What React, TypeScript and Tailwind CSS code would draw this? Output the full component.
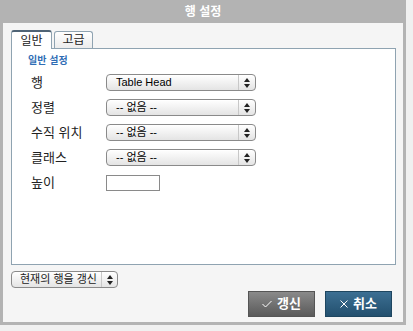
import React from "react";

const font = { fontFamily: '"Liberation Sans", "Noto Sans CJK KR", sans-serif' };

function Arrows() {
  return (
    <svg width="6" height="10" viewBox="0 0 6 10">
      <path d="M3 0 L6 4 L0 4 Z" fill="#222" />
      <path d="M0 6 L6 6 L3 10 Z" fill="#222" />
    </svg>
  );
}

function Select({ value, w }: { value: string; w: string }) {
  return (
    <div
      className={`flex h-[17px] ${w} items-stretch rounded-[4px] border border-[#8a8a8a] bg-gradient-to-b from-[#ffffff] to-[#e4e4e4] shadow-[inset_0_1px_0_#fff]`}
    >
      <div className="flex flex-1 items-center pl-[9px] text-[11px] leading-none text-black">{value}</div>
      <div className="flex w-[17px] items-center justify-center border-l border-[#c8c8c8]">
        <Arrows />
      </div>
    </div>
  );
}

function Row({ label, children }: { label: string; children: React.ReactNode }) {
  return (
    <div className="flex h-[25px] items-center">
      <div className="w-[94px] pl-[19px] text-[13px] text-[#222]">{label}</div>
      {children}
    </div>
  );
}

export default function App() {
  return (
    <div className="h-[331px] w-[413px] overflow-hidden bg-[#f0f0f0]" style={font}>
      <div className="flex h-[325px] w-[406px] flex-col border-[3px] border-t-0 border-[#b3b3b3] bg-[#f5f5f5]">
        <div className="-mx-[3px] flex h-[23px] items-center justify-center bg-[#b3b3b3] text-[12px] font-bold text-white">
          행 설정
        </div>
        <div className="flex flex-1 flex-col px-[8px] pt-[7px]">
          <div className="flex items-end gap-[2px] pl-[0px]">
            <div className="relative z-10 -mb-px flex h-[19px] w-[41px] items-center justify-center rounded-t-[3px] border border-b-0 border-[#8fa3b1] border-t-[2px] border-t-[#4f6375] bg-white text-[12px] text-[#222]">
              일반
            </div>
            <div className="flex h-[17px] w-[39px] items-center justify-center rounded-t-[3px] border border-b-0 border-[#8fa3b1] bg-gradient-to-b from-[#ffffff] to-[#ececec] text-[12px] text-[#222]">
              고급
            </div>
          </div>
          <div className="h-[217px] w-[385px] border border-[#8fa3b1] bg-white pt-[4px]">
            <div className="pl-[16px] text-[10px] font-bold text-[#2f6db5]">일반 설정</div>
            <div className="mt-[2px] flex flex-col">
              <Row label="행">
                <Select value="Table Head" w="w-[150px]" />
              </Row>
              <Row label="정렬">
                <Select value="-- 없음 --" w="w-[150px]" />
              </Row>
              <Row label="수직 위치">
                <Select value="-- 없음 --" w="w-[150px]" />
              </Row>
              <Row label="클래스">
                <Select value="-- 없음 --" w="w-[150px]" />
              </Row>
              <Row label="높이">
                <div className="h-[16px] w-[54px] border border-[#8a8a8a] bg-white" />
              </Row>
            </div>
          </div>
          <div className="mt-[6px]">
            <div className="flex h-[17px] w-[107px] items-stretch rounded-[4px] border border-[#8a8a8a] bg-gradient-to-b from-[#ffffff] to-[#e4e4e4]">
              <div className="flex flex-1 items-center pl-[8px] text-[11px] text-[#222]">현재의 행을 갱신</div>
              <div className="flex w-[16px] items-center justify-center border-l border-[#c8c8c8]">
                <Arrows />
              </div>
            </div>
          </div>
          <div className="mt-[3px] flex justify-end gap-[10px] pr-[3px]">
            <button className="flex h-[26px] w-[67px] items-center justify-center gap-[5px] border border-[#555] bg-gradient-to-b from-[#8a8a8a] to-[#5a5a5a] text-[13px] font-bold text-white">
              <svg width="10" height="8" viewBox="0 0 10 8">
                <path d="M0.5 4 L3.5 7 L9.5 1" stroke="#fff" strokeWidth="1" fill="none" />
              </svg>
              갱신
            </button>
            <button className="flex h-[26px] w-[67px] items-center justify-center gap-[5px] border border-[#1e4660] bg-gradient-to-b from-[#3c6f93] to-[#23506e] text-[13px] font-bold text-white">
              <svg width="8" height="8" viewBox="0 0 8 8">
                <path d="M0.5 0.5 L7.5 7.5 M7.5 0.5 L0.5 7.5" stroke="#fff" strokeWidth="1" />
              </svg>
              취소
            </button>
          </div>
        </div>
      </div>
    </div>
  );
}
